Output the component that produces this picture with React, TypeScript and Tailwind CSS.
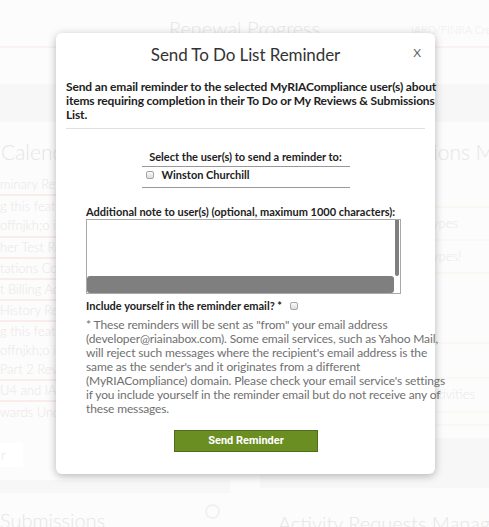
const LEFT_ITEMS = [
  { lines: ["minary Renewal"], h: "h-[21px]", line: true },
  { lines: ["g this feature", "offnjkh;o i"], h: "h-[42px]", line: true },
  { lines: ["her Test Record"], h: "h-[21px]", line: true },
  { lines: ["tations Collect"], h: "h-[21px]", line: true },
  { lines: ["t Billing Activity"], h: "h-[21px]", line: true },
  { lines: ["History Review"], h: "h-[21px]", line: true },
  { lines: ["g this feature", "offnjkh;o i"], h: "h-[38px]", line: false },
  { lines: ["Part 2 Review"], h: "h-[21px]", line: true },
  { lines: ["U4 and IAR"], h: "h-[21px]", line: true },
  { lines: ["wards Underway"], h: "h-[20px]", line: false },
];

const RIGHT_ROWS = [
  { t: "", h: "h-[33px]" },
  { t: "ypes", h: "h-[33px]" },
  { t: "ypes!", h: "h-[33px]" },
  { t: "", h: "h-[70px]" },
  { t: "", h: "h-[35px]" },
  { t: "ctivities", h: "h-[34px]" },
  { t: "", h: "h-[13px]" },
];

function Background() {
  return (
    <div className="flex h-full w-full flex-col font-['Lato',sans-serif] font-light text-[#ececec]">
      {/* page header */}
      <div className="relative flex h-[48px] shrink-0 justify-center border-b-2 border-[#faf2f2] pt-[15px]">
        <span className="text-[20px] leading-[26px] text-[#e6e6e6]">Renewal Progress</span>
        <span className="absolute left-[411px] top-[22px] whitespace-nowrap text-[11px] text-[#ededed]">IARD/FINRA Credent</span>
      </div>
      <div className="mt-[36px] h-[38px] shrink-0 bg-[#f7f7f7]" />

      <div className="flex min-h-0 flex-1 gap-[30px] overflow-hidden">
        {/* left column */}
        <div className="flex w-[230px] shrink-0 flex-col">
          <div className="shrink-0 pl-[1px] pt-[13px] text-[21px] leading-[34px] text-[#e6e6e6]">Calendar</div>
          <div className="flex shrink-0 flex-col pt-[6px] text-[13px] leading-[19px] text-[#ebe6e6]">
            {LEFT_ITEMS.map((it, i) => (
              <div key={i} className={`${it.h} flex flex-col justify-center ${it.line ? "border-b-2 border-[#f9ecea]" : ""}`}>
                {it.lines.map((l, j) => (
                  <span key={j} className="whitespace-nowrap">{l}</span>
                ))}
              </div>
            ))}
          </div>
          <div className="shrink-0 pt-[21px]">
            <div className="h-[24px] w-[23px] bg-white pl-[1px] text-[13px] leading-[24px] text-[#e6e6e6]">r</div>
          </div>
          <div className="mt-[13px] h-[13px] shrink-0 bg-[#f7f7f7]" />
          <div className="flex shrink-0 items-center justify-between pr-[10px] pt-[11px]">
            <span className="whitespace-nowrap text-[20px] leading-[32px] text-[#e6e6e6]">Submissions</span>
            <span className="mt-[-18px] h-[15px] w-[15px] rounded-full border-2 border-[#f1f1f1]" />
          </div>
        </div>

        {/* right column */}
        <div className="flex min-w-0 flex-1 flex-col">
          <div className="shrink-0 pl-[173px] pt-[13px] text-[21px] leading-[34px] text-[#e6e6e6]">
            <span className="whitespace-nowrap">ions Mo</span>
          </div>
          <div className="flex shrink-0 flex-col pt-[6px]">
            {RIGHT_ROWS.map((r, i) => (
              <div
                key={i}
                className={`${r.h} flex items-center border-b-2 border-[#f9f8f3] pl-[172px] text-[13px] text-[#e9e9e9]`}
              >
                {r.t}
              </div>
            ))}
          </div>
          <div className="mt-[12px] h-[50px] shrink-0 bg-[#f7f7f7]" />
          <div className="shrink-0 whitespace-nowrap pl-[18px] pt-[19px] text-[20px] leading-[32px] text-[#e6e6e6]">
            Activity Requests Management
          </div>
        </div>
      </div>
    </div>
  );
}

function Checkbox({ className = "" }: { className?: string }) {
  return (
    <span
      className={`inline-block h-[8px] w-[8px] shrink-0 rounded-[2px] border border-[#a5a5a5] bg-gradient-to-b from-[#fbfbfb] to-[#dcdcdc] ${className}`}
    />
  );
}

export default function App() {
  return (
    <div className="relative h-[527px] w-[489px] overflow-hidden bg-[#fcfcfc]">
      <Background />

      {/* modal */}
      <div className="absolute left-[56px] top-[33px] flex h-[441px] w-[379px] flex-col rounded-[6px] bg-white px-[10px] font-['Lato',sans-serif] text-[#333] shadow-[0_2px_8px_rgba(0,0,0,0.28)]">
        <div className="relative flex justify-center pt-[10px]">
          <span className="text-[17px] leading-[24px] tracking-[-0.1px] text-[#333]">Send To Do List Reminder</span>
          <span className="absolute right-[4px] top-[13px] text-[12px] leading-[14px] text-[#666]">X</span>
        </div>

        <p className="mt-[13px] whitespace-nowrap text-[12px] font-bold leading-[14px] tracking-[-0.15px] text-[#222]">
          Send an email reminder to the selected MyRIACompliance user(s) about
          <br />
          items requiring completion in their To Do or My Reviews &amp; Submissions
          <br />
          List.
        </p>
        <div className="mt-[6px] h-px bg-[#e0e0e0]" />

        <div className="mx-auto mt-[21px] flex w-[208px] flex-col">
          <div className="whitespace-nowrap text-center text-[11px] font-bold leading-[14px] text-[#222]">
            Select the user(s) to send a reminder to:
          </div>
          <div className="mt-[2px] h-px bg-[#999]" />
          <label className="flex h-[20px] items-start gap-[8px] pl-[4px] pt-[1px] text-[11px] font-bold leading-[14px] text-[#222]">
            <Checkbox className="mt-[3px]" />
            Winston Churchill
          </label>
          <div className="h-px bg-[#999]" />
        </div>

        <div className="ml-[20px] mt-[17px] flex w-[315px] flex-col">
          <div className="whitespace-nowrap text-[11px] font-bold leading-[14px] text-[#222]">
            Additional note to user(s) (optional, maximum 1000 characters):
          </div>
          <div className="flex h-[75px] flex-col border border-[#a9a9a9] bg-white">
            <div className="flex flex-1 justify-end">
              <div className="mr-[1px] w-[4px] rounded-b-[2px] bg-[#7f7f7f]" />
            </div>
            <div className="flex h-[17px]">
              <div className="flex-1 rounded-[3px] bg-[#7f7f7f]" />
              <div className="w-[6px]" />
            </div>
          </div>

          <div className="mt-[5px] flex items-center gap-[8px] text-[11px] font-bold leading-[14px] text-[#222]">
            <span className="whitespace-nowrap">Include yourself in the reminder email? *</span>
            <Checkbox />
          </div>

          <p className="mt-[5px] whitespace-nowrap text-[12px] leading-[14px] tracking-[-0.13px] text-[#707070]">
            * These reminders will be sent as "from" your email address
            <br />
            (developer@riainabox.com). Some email services, such as Yahoo Mail,
            <br />
            will reject such messages where the recipient's email address is the
            <br />
            same as the sender's and it originates from a different
            <br />
            (MyRIACompliance) domain. Please check your email service's settings
            <br />
            if you include yourself in the reminder email but do not receive any of
            <br />
            these messages.
          </p>

          <button className="ml-[88px] mt-[14px] flex h-[22px] w-[144px] items-center justify-center border border-[#4f6d1a] bg-[#6b8e23] font-['Roboto',sans-serif] text-[11px] font-bold text-white">
            Send Reminder
          </button>
        </div>
      </div>
    </div>
  );
}
